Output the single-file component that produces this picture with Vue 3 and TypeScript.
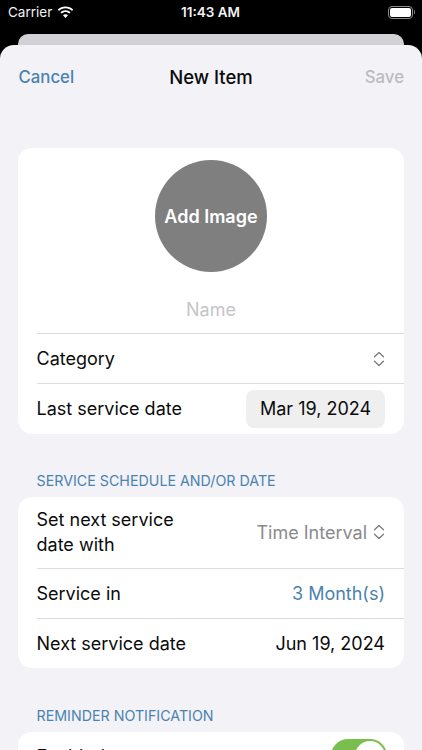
<script setup lang="ts">
const chevron = 'M1.5 5.800 L6 1.500 L10.500 5.800 M1.500 10.200 L6 14.500 L10.500 10.200'
</script>

<template>
  <div class="screen">
    <header class="status">
      <div class="status-left">
        <span>Carrier</span>
        <svg class="wifi" width="17" height="13" viewBox="0 0 17 13">
          <path d="M8.5 2.3c2.5 0 4.8 1 6.5 2.6l1.2-1.3C14.2 1.6 11.5.4 8.5.4S2.800 1.600.8 3.600L2 4.900c1.700-1.600 4-2.600 6.500-2.600z" fill="#fff" />
          <path d="M8.500 6.100c1.500 0 2.800.6 3.800 1.500l1.300-1.300c-1.300-1.200-3.100-2-5.100-2s-3.800.8-5.100 2l1.300 1.300c1-.9 2.300-1.500 3.800-1.500z" fill="#fff" />
          <path d="M8.500 8.200c-1 0-1.900.4-2.500 1l2.500 2.700 2.500-2.700c-.6-.6-1.500-1-2.500-1z" fill="#fff" />
        </svg>
      </div>
      <span class="clock">11:43 AM</span>
      <div class="battery">
        <span class="battery-body"><span class="battery-fill"></span></span>
        <span class="battery-cap"></span>
      </div>
    </header>

    <div class="back-sheet"></div>

    <main class="sheet">
      <nav class="nav">
        <span class="cancel">Cancel</span>
        <span class="title">New Item</span>
        <span class="save">Save</span>
      </nav>

      <section class="card first">
        <div class="image-block">
          <div class="avatar">Add Image</div>
          <div class="name">Name</div>
          <div class="divider"></div>
        </div>
        <div class="row h50 line">
          <span>Category</span>
          <svg class="chev" width="12" height="16" viewBox="0 0 12 16">
            <path :d="chevron" />
          </svg>
        </div>
        <div class="row last-row">
          <span>Last service date</span>
          <span class="date-pill">Mar 19, 2024</span>
        </div>
      </section>

      <h2 class="section-title one">SERVICE SCHEDULE AND/OR DATE</h2>
      <section class="card">
        <div class="row h72 line">
          <span class="two-line">Set next service<br />date with</span>
          <span class="picker">
            Time Interval
            <svg class="chev" width="12" height="16" viewBox="0 0 12 16">
              <path :d="chevron" />
            </svg>
          </span>
        </div>
        <div class="row h50 line">
          <span>Service in</span>
          <span class="blue">3 Month(s)</span>
        </div>
        <div class="row h49">
          <span>Next service date</span>
          <span>Jun 19, 2024</span>
        </div>
      </section>

      <h2 class="section-title two">REMINDER NOTIFICATION</h2>
      <section class="card">
        <div class="row h50 toggle-row">
          <span class="toggle-label">Enabled</span>
          <span class="toggle"><span class="knob"></span></span>
        </div>
      </section>
    </main>
  </div>
</template>

<style>
html,
body {
  margin: 0;
  background: #000;
  overflow: hidden;
}
</style>

<style scoped>
.screen {
  width: 422px;
  height: 750px;
  overflow: hidden;
  background: #000;
  font-family: Inter, "Liberation Sans", sans-serif;
  color: #0b0b0c;
  position: relative;
}

.status {
  height: 34px;
  display: grid;
  grid-template-columns: 1fr auto 1fr;
  align-items: center;
  padding: 0 7px 10px 7px;
  color: #f2f2f2;
  font-size: 13.5px;
  box-sizing: border-box;
}

.status-left {
  display: flex;
  align-items: center;
  gap: 5px;
  padding-left: 1px;
}

.clock {
  font-weight: 600;
  font-size: 13.5px;
  margin-left: -1px;
}

.battery {
  justify-self: end;
  display: flex;
  align-items: center;
  gap: 1px;
}

.battery-body {
  width: 25px;
  height: 13px;
  border: 1px solid #8b8b8b;
  border-radius: 4px;
  padding: 1px;
  box-sizing: border-box;
  display: flex;
}

.battery-fill {
  flex: 1;
  background: #fff;
  border-radius: 2px;
}

.battery-cap {
  width: 1.500px;
  height: 4px;
  background: #777;
  border-radius: 0 1px 1px 0;
}

.back-sheet {
  height: 20px;
  margin: 0 18px -9px;
  background: #d1d1d6;
  border-radius: 10px 10px 0 0;
}

.sheet {
  height: 705px;
  background: #f2f2f7;
  border-radius: 14px 14px 0 0;
  padding: 0 18px;
  box-sizing: border-box;
  position: relative;
}

.nav {
  height: 64px;
  display: grid;
  grid-template-columns: 1fr auto 1fr;
  align-items: center;
  font-size: 16.800px;
  font-weight: 500;
}

.cancel {
  color: #4a82b0;
  padding-left: 0.500px;
}

.title {
  color: #0b0b0c;
  font-size: 18.500px;
  font-weight: 500;
}

.save {
  color: #bcbcc0;
  justify-self: end;
}

.card {
  background: #fff;
  border-radius: 14px;
  padding-left: 18.500px;
  overflow: hidden;
}

.first {
  margin-top: 39px;
}

.image-block {
  height: 186px;
  display: flex;
  flex-direction: column;
  align-items: center;
  margin-left: -18.500px;
  padding-top: 12px;
  box-sizing: border-box;
}

.avatar {
  width: 112px;
  height: 112px;
  border-radius: 50%;
  background: #7f7f7f;
  color: #fff;
  font-size: 18px;
  font-weight: 600;
  display: flex;
  align-items: center;
  justify-content: center;
}

.name {
  margin-top: 27px;
  font-size: 18px;
  line-height: 22px;
  color: #c5c5c8;
}

.divider {
  align-self: stretch;
  height: 1px;
  margin: auto 0 0 18.500px;
  background: #dcdcde;
}

.row {
  display: flex;
  align-items: center;
  justify-content: space-between;
  padding-right: 19px;
  font-size: 18px;
  box-sizing: border-box;
}

.h50 {
  height: 50px;
}

.h72 {
  height: 72px;
}

.h49 {
  height: 49px;
}

.line {
  border-bottom: 1px solid #dcdcde;
}

.last-row {
  height: 49.500px;
}

.date-pill {
  background: #efeff0;
  border-radius: 8px;
  height: 38.500px;
  width: 139px;
  display: flex;
  align-items: center;
  justify-content: center;
}

.two-line {
  line-height: 25px;
}

.picker {
  display: flex;
  align-items: center;
  gap: 6px;
  color: #8a8a8e;
}

.chev {
  fill: none;
  stroke: #77777b;
  stroke-width: 1.200;
  stroke-linecap: round;
  stroke-linejoin: round;
  flex: none;
}

.blue {
  color: #4a82b0;
}

.section-title {
  margin: 0 0 8px;
  padding-left: 18.500px;
  font-size: 14.250px;
  line-height: 16px;
  font-weight: 400;
  color: #4a82b0;
}

.section-title.one {
  margin-top: 39px;
}

.section-title.two {
  margin-top: 40px;
}

.toggle-row {
  align-items: flex-start;
  padding: 14px 17px 0 0;
}

.toggle-label {
  line-height: 22px;
}

.toggle {
  width: 56px;
  height: 34px;
  border-radius: 17px;
  background: #7abf4e;
  position: relative;
  margin-top: -7px;
}

.knob {
  position: absolute;
  top: 2px;
  right: 2px;
  width: 30px;
  height: 30px;
  border-radius: 50%;
  background: #fff;
}
</style>
